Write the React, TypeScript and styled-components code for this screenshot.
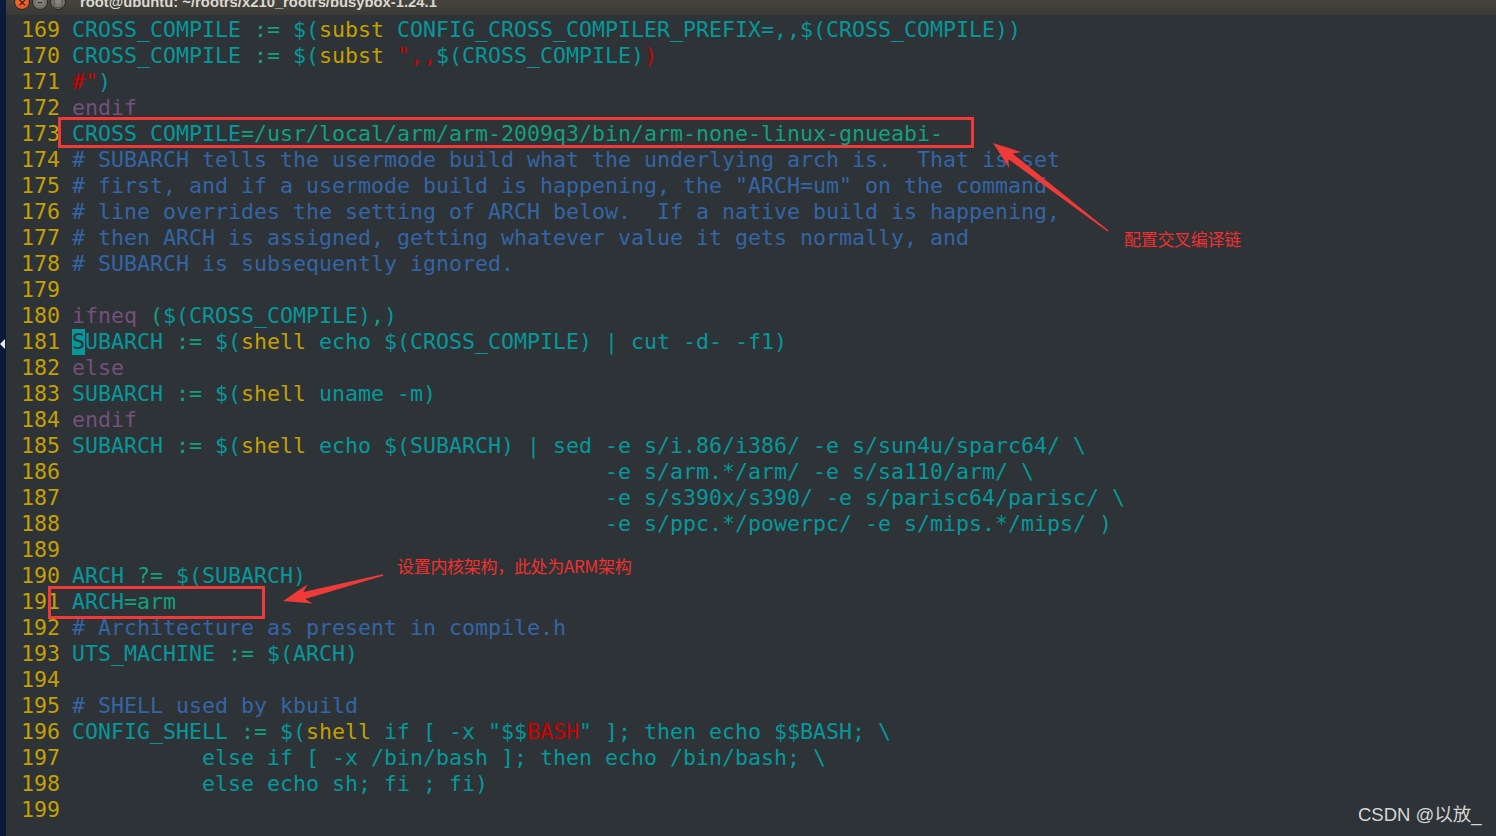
import React from "react";
import styled, { createGlobalStyle } from "styled-components";

const GlobalStyle = createGlobalStyle`
  html, body { margin: 0; padding: 0; background: #2e3337; }
  body { width: 1496px; height: 836px; overflow: hidden; }
`;

const C = {
  T: "#06989a",
  G: "#14a07a",
  Y: "#c4a000",
  R: "#cc0000",
  B: "#3465a4",
  P: "#75507b",
};

type Seg = [keyof typeof C | "CUR", string];
type Line = { n: number; segs: Seg[] };

const sp = (k: number) => " ".repeat(k);

const LINES: Line[] = [
  { n: 169, segs: [["T", "CROSS_COMPILE "], ["G", ":="], ["T", " $("], ["Y", "subst"], ["T", " CONFIG_CROSS_COMPILER_PREFIX=,,$(CROSS_COMPILE))"]] },
  { n: 170, segs: [["T", "CROSS_COMPILE "], ["G", ":="], ["T", " $("], ["Y", "subst"], ["T", " "], ["R", "\",,"], ["T", "$(CROSS_COMPILE)"], ["R", ")"]] },
  { n: 171, segs: [["R", "#\""], ["T", ")"]] },
  { n: 172, segs: [["P", "endif"]] },
  { n: 173, segs: [["T", "CROSS_COMPILE"], ["G", "=/usr/local/arm/arm-2009q3/bin/arm-none-linux-gnueabi-"]] },
  { n: 174, segs: [["B", "# SUBARCH tells the usermode build what the underlying arch is.  That is set"]] },
  { n: 175, segs: [["B", "# first, and if a usermode build is happening, the \"ARCH=um\" on the command"]] },
  { n: 176, segs: [["B", "# line overrides the setting of ARCH below.  If a native build is happening,"]] },
  { n: 177, segs: [["B", "# then ARCH is assigned, getting whatever value it gets normally, and"]] },
  { n: 178, segs: [["B", "# SUBARCH is subsequently ignored."]] },
  { n: 179, segs: [] },
  { n: 180, segs: [["P", "ifneq"], ["G", " ("], ["T", "$(CROSS_COMPILE)"], ["G", ","], ["T", ")"]] },
  { n: 181, segs: [["CUR", "S"], ["T", "UBARCH "], ["G", ":="], ["T", " $("], ["Y", "shell"], ["T", " echo $(CROSS_COMPILE) | cut -d- -f1)"]] },
  { n: 182, segs: [["P", "else"]] },
  { n: 183, segs: [["T", "SUBARCH "], ["G", ":="], ["T", " $("], ["Y", "shell"], ["T", " uname -m)"]] },
  { n: 184, segs: [["P", "endif"]] },
  { n: 185, segs: [["T", "SUBARCH "], ["G", ":="], ["T", " $("], ["Y", "shell"], ["T", " echo $(SUBARCH) | sed -e s/i.86/i386/ -e s/sun4u/sparc64/ \\"]] },
  { n: 186, segs: [["T", sp(41) + "-e s/arm.*/arm/ -e s/sa110/arm/ \\"]] },
  { n: 187, segs: [["T", sp(41) + "-e s/s390x/s390/ -e s/parisc64/parisc/ \\"]] },
  { n: 188, segs: [["T", sp(41) + "-e s/ppc.*/powerpc/ -e s/mips.*/mips/ )"]] },
  { n: 189, segs: [] },
  { n: 190, segs: [["T", "ARCH "], ["G", "?="], ["T", " $(SUBARCH)"]] },
  { n: 191, segs: [["T", "ARCH"], ["G", "=arm"]] },
  { n: 192, segs: [["B", "# Architecture as present in compile.h"]] },
  { n: 193, segs: [["T", "UTS_MACHINE "], ["G", ":="], ["T", " $(ARCH)"]] },
  { n: 194, segs: [] },
  { n: 195, segs: [["B", "# SHELL used by kbuild"]] },
  { n: 196, segs: [["T", "CONFIG_SHELL "], ["G", ":="], ["T", " $("], ["Y", "shell"], ["T", " if [ -x \"$$"], ["R", "BASH"], ["T", "\" ]; then echo $$BASH; \\"]] },
  { n: 197, segs: [["T", sp(10) + "else if [ -x /bin/bash ]; then echo /bin/bash; \\"]] },
  { n: 198, segs: [["T", sp(10) + "else echo sh; fi ; fi)"]] },
  { n: 199, segs: [] },
];

const Screen = styled.div`
  position: relative;
  display: flex;
  width: 1496px;
  height: 836px;
  overflow: hidden;
`;

const DesktopStrip = styled.div`
  width: 6px;
  flex: none;
  background: #0b1a3a;
  display: flex;
  flex-direction: column;
`;

const EdgeMarker = styled.div`
  margin-top: 339px;
  width: 0;
  height: 0;
  border-top: 5px solid transparent;
  border-bottom: 5px solid transparent;
  border-right: 5px solid #e8e8e8;
`;

const Window = styled.div`
  flex: 1;
  display: flex;
  flex-direction: column;
  background: #2e3337;
`;

const TitleBar = styled.div`
  height: 15px;
  flex: none;
  background: linear-gradient(#45443f, #3a3935);
  overflow: hidden;
`;

const TitleInner = styled.div`
  display: flex;
  align-items: center;
  gap: 2px;
  margin-top: -7px;
  padding-left: 8px;
  height: 18px;
`;

const WinButton = styled.div<{ $close?: boolean }>`
  width: 16px;
  height: 16px;
  border-radius: 50%;
  box-sizing: border-box;
  border: 1px solid #2a2925;
  background: ${(p) => (p.$close ? "radial-gradient(circle at 50% 40%, #f47a4a, #df4a16)" : "radial-gradient(circle at 50% 40%, #8a8983, #64635e)")};
  color: ${(p) => (p.$close ? "#4a1a08" : "#3a3935")};
  font: bold 11px "DejaVu Sans", sans-serif;
  display: flex;
  align-items: center;
  justify-content: center;
  line-height: 1;
`;

const TitleText = styled.div`
  margin-left: 12px;
  color: #dcd8d0;
  font: bold 14.8px "Liberation Sans", "DejaVu Sans", sans-serif;
  white-space: nowrap;
`;

const Terminal = styled.div`
  flex: 1;
  padding: 2px 0 0 15px;
  font-family: "DejaVu Sans Mono", monospace;
  font-size: 21.6px;
  line-height: 26px;
`;

const Row = styled.div`
  display: flex;
  height: 26px;
  white-space: pre;
`;

const LineNo = styled.span`
  color: #c4a000;
  width: 51px;
  flex: none;
`;

const Tok = styled.span<{ $c: string }>`
  color: ${(p) => p.$c};
`;

const Cursor = styled.span`
  background: #06989a;
  color: #2e3337;
`;

const Overlay = styled.svg`
  position: absolute;
  left: 0;
  top: 0;
  pointer-events: none;
`;

const Note = styled.div<{ $x: number; $y: number }>`
  position: absolute;
  left: ${(p) => p.$x}px;
  top: ${(p) => p.$y}px;
  color: #f0302e;
  font: 17px "Noto Sans CJK SC", "Liberation Sans", sans-serif;
  line-height: 20px;
  white-space: nowrap;
  letter-spacing: -0.3px;
`;

const Watermark = styled.div`
  position: absolute;
  left: 1358px;
  top: 803px;
  color: #d6d6d6;
  font: 18.5px "Liberation Sans", "Noto Sans CJK SC", sans-serif;
  line-height: 24px;
  white-space: nowrap;
`;

export default function App() {
  return (
    <>
      <GlobalStyle />
      <Screen>
        <DesktopStrip>
          <EdgeMarker />
        </DesktopStrip>
        <Window>
          <TitleBar>
            <TitleInner>
              <WinButton $close>×</WinButton>
              <WinButton>–</WinButton>
              <WinButton>□</WinButton>
              <TitleText>root@ubuntu: ~/rootrs/x210_rootrs/busybox-1.24.1</TitleText>
            </TitleInner>
          </TitleBar>
          <Terminal>
            {LINES.map((l) => (
              <Row key={l.n}>
                <LineNo>{l.n}</LineNo>
                {l.segs.map(([k, t], i) =>
                  k === "CUR" ? (
                    <Cursor key={i}>{t}</Cursor>
                  ) : (
                    <Tok key={i} $c={C[k]}>
                      {t}
                    </Tok>
                  )
                )}
              </Row>
            ))}
          </Terminal>
        </Window>
        <Overlay width="1496" height="836" viewBox="0 0 1496 836">
          <rect x="59.5" y="118.5" width="913" height="28" fill="none" stroke="#f03a3a" strokeWidth="3" />
          <rect x="49.5" y="587.5" width="214" height="30" fill="none" stroke="#f03a3a" strokeWidth="3" />
          <polygon
            points="993,143 1021.3,152.1 1012.6,153.6 1108.4,230.4 1107.6,231.6 1008.4,159.2 1009.1,167.9"
            fill="#f03a3a"
          />
          <polygon
            points="283,601 307.6,584.2 303.4,592.1 382.8,574.3 383.2,575.7 305.2,598.9 312.6,603.6"
            fill="#f03a3a"
          />
        </Overlay>
        <Note $x={1124} $y={229}>配置交叉编译链</Note>
        <Note $x={397} $y={556}>设置内核架构，此处为ARM架构</Note>
        <Watermark>CSDN @以放_</Watermark>
      </Screen>
    </>
  );
}
